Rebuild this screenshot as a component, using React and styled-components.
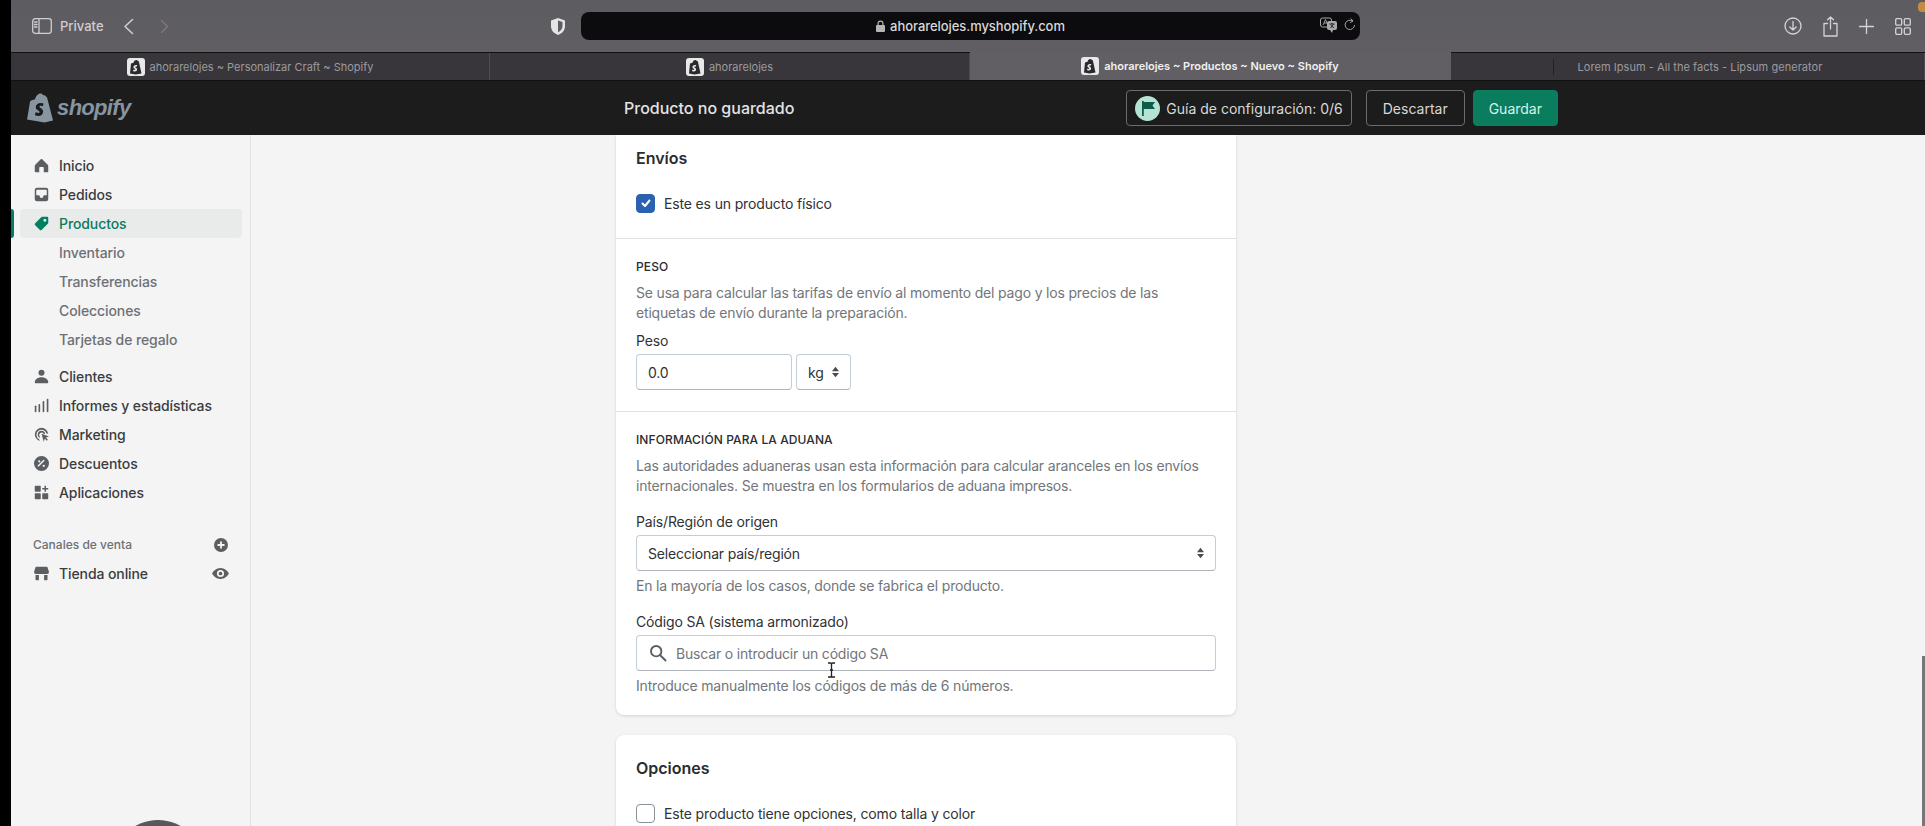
import React from 'react';
import styled, { createGlobalStyle } from 'styled-components';

const GlobalStyle = createGlobalStyle`
  html, body { margin: 0; padding: 0; background: #000; }
  body { font-family: Inter, "Noto Sans", sans-serif; overflow: hidden; }
  * { box-sizing: border-box; }
`;

const Screen = styled.div`
  position: relative;
  width: 1925px;
  height: 826px;
  padding-left: 11px;
  background: #000;
  overflow: hidden;
`;

const Window = styled.div`
  display: flex;
  flex-direction: column;
  height: 100%;
`;

/* browser chrome */
const Toolbar = styled.div`
  height: 52px;
  display: flex;
  align-items: center;
  background: linear-gradient(#5d5c60, #605e63);
  color: #d4d3d6;
`;

const ToolbarLeft = styled.div`
  width: 570px;
  display: flex;
  align-items: center;
  padding-left: 21px;
  color: #cfced1;
`;

const Private = styled.span`
  font-size: 13px;
  font-weight: 500;
  margin: 0 19px 0 8px;
`;

const Forward = styled.span`
  display: flex;
  margin-left: 26px;
  color: #7d7c80;
`;

const Shield = styled.span`
  display: flex;
  margin-left: auto;
  margin-right: 16px;
`;

const UrlBar = styled.div`
  position: relative;
  width: 779px;
  height: 28px;
  display: flex;
  align-items: center;
  justify-content: center;
  gap: 5px;
  border-radius: 8px;
  background: #0c0b0e;
  color: #d8d8d8;
  font-size: 13px;
  font-weight: 500;
  letter-spacing: -0.06px;
`;

const UrlTools = styled.div`
  position: absolute;
  right: 4px;
  top: 5px;
  display: flex;
  align-items: center;
  gap: 6px;
  color: #a8a8a8;
`;

const ToolbarRight = styled.div`
  flex: 1;
  display: flex;
  align-items: center;
  justify-content: flex-end;
  gap: 21px;
  padding-right: 14px;
`;

const TabRow = styled.div`
  height: 29px;
  display: grid;
  grid-template-columns: 479px 480px 481px 1fr;
  border-top: 1px solid #111;
  border-bottom: 1px solid #111;
  background: #38363b;
`;

const Tab = styled.div`
  display: flex;
  align-items: center;
  justify-content: center;
  gap: 5px;
  font-size: 11px;
  font-weight: ${({ $active }) => ($active ? 600 : 400)};
  color: ${({ $active }) => ($active ? '#f0f0f0' : '#9c9b9e')};
  background: ${({ $active }) => ($active ? '#615f64' : 'transparent')};
  border-right: 1px solid ${({ $active }) => ($active ? 'transparent' : '#4c4b4f')};
  margin-top: ${({ $active }) => ($active ? '-1px' : '0')};
`;

const TabSpacer = styled.span`
  width: 6px;
  height: 16px;
  border-left: 1px solid #222;
  margin-right: 10px;
`;

const TabLorem = styled.span`
  letter-spacing: 0.05px;
  margin-left: 4px;
`;

/* shopify top bar */
const TopBar = styled.div`
  height: 54px;
  display: flex;
  align-items: center;
  padding-right: 367px;
  background: #1c1c1d;
  color: #e3e3e3;
`;

const LogoArea = styled.div`
  width: 613px;
  display: flex;
  align-items: center;
  gap: 4px;
  padding-left: 16px;
`;

const LogoText = styled.span`
  font-family: "Liberation Sans", sans-serif;
  font-size: 22px;
  font-weight: 700;
  font-style: italic;
  letter-spacing: -0.7px;
  color: #8795a0;
`;

const PageTitle = styled.div`
  font-size: 16px;
  font-weight: 500;
`;

const BarButton = styled.div`
  height: 36px;
  display: flex;
  align-items: center;
  gap: 6px;
  padding: 0 ${({ $pad }) => $pad || 15}px;
  margin-left: ${({ $gap }) => $gap || 0}px;
  border: 1px solid ${({ $primary }) => ($primary ? '#0a7d5f' : '#6b6b6b')};
  border-radius: 4px;
  background: ${({ $primary }) => ($primary ? '#0a7d5f' : 'transparent')};
  color: ${({ $primary }) => ($primary ? '#d8f3e8' : '#d8d8d8')};
  font-size: 14px;
  white-space: nowrap;
`;

const Actions = styled.div`
  margin-left: auto;
  display: flex;
  align-items: center;
`;

const FlagBadge = styled.span`
  width: 25px;
  height: 25px;
  border-radius: 50%;
  background: #b7e3d5;
  display: flex;
  align-items: center;
  justify-content: center;
`;

/* page */
const Body = styled.div`
  flex: 1;
  display: flex;
  min-height: 0;
  background: #f4f4f4;
`;

const Sidebar = styled.nav`
  width: 240px;
  flex: none;
  padding-top: 16px;
  border-right: 1px solid #e0e0e0;
  background: #f4f4f4;
`;

const NavGroup = styled.div`
  margin-bottom: ${({ $gap }) => $gap || 0}px;
`;

const NavRow = styled.div`
  position: relative;
  height: 29px;
  margin: 0 8px 0 9px;
  display: flex;
  align-items: center;
  gap: 10px;
  padding-left: 14px;
  border-radius: 4px;
  font-size: 14px;
  font-weight: 500;
  letter-spacing: -0.1px;
  color: ${({ $active, $sub }) => ($active ? '#0b7a5c' : $sub ? '#6d7175' : '#3a3d40')};
  background: ${({ $active }) => ($active ? '#e9eaea' : 'transparent')};

  ${({ $active }) =>
    $active &&
    `&::before {
      content: '';
      position: absolute;
      left: -9px;
      top: 0;
      bottom: 0;
      width: 3px;
      background: #008060;
      border-radius: 0 3px 3px 0;
    }`}
`;

const NavIcon = styled.span`
  width: 15px;
  height: 15px;
  flex: none;
  display: flex;
  color: ${({ $active }) => ($active ? '#008060' : '#5c5f62')};
`;

const NavLabel = styled.span`
  margin-left: ${({ $sub }) => ($sub ? '25px' : '0')};
`;

const NavTail = styled.span`
  margin-left: auto;
  margin-right: ${({ $end }) => $end || 14}px;
  display: flex;
  color: #5c5f62;
`;

const ChannelHead = styled.div`
  height: 29px;
  margin: 0 8px 0 9px;
  padding-left: 13px;
  display: flex;
  align-items: center;
  font-size: 12px;
  font-weight: 500;
  color: #6d7175;
`;

const Content = styled.main`
  flex: 1;
  padding-left: 365px;
  overflow: hidden;
`;

const Card = styled.section`
  width: 620px;
  background: #fff;
  border-radius: ${({ $first }) => ($first ? '0 0 8px 8px' : '8px')};
  box-shadow: 0 1px 3px rgba(63, 63, 68, 0.18);
  margin-bottom: 20px;
`;

const Section = styled.div`
  padding: ${({ $top }) => $top}px 20px ${({ $bottom }) => $bottom}px;
  border-bottom: ${({ $divider }) => ($divider ? '1px solid #dfe1e3' : 'none')};
`;

const CardTitle = styled.h2`
  margin: 0 0 23px;
  font-size: 16px;
  line-height: 24px;
  font-weight: 600;
  color: #2a2c2e;
`;

const CheckRow = styled.label`
  display: flex;
  align-items: center;
  gap: 9px;
  height: 20px;
  font-size: 14px;
  letter-spacing: -0.15px;
  color: #303234;
`;

const CheckBox = styled.span`
  width: 19px;
  height: 19px;
  flex: none;
  display: flex;
  align-items: center;
  justify-content: center;
  border-radius: 4px;
  border: 1.5px solid ${({ $checked }) => ($checked ? '#2a62b0' : '#8c9196')};
  background: ${({ $checked }) => ($checked ? '#2a62b0' : '#fff')};
`;

const Subheading = styled.h3`
  margin: 0 0 9px;
  padding-top: 1px;
  margin-bottom: 8px;
  font-size: 12px;
  line-height: 16px;
  font-weight: 500;
  letter-spacing: 0.1px;
  text-transform: uppercase;
  color: #2a2c2e;
`;

const Muted = styled.p`
  margin: 0;
  font-size: 14px;
  line-height: 20px;
  letter-spacing: -0.18px;
  color: #72767a;
`;

const Label = styled.div`
  margin: ${({ $top }) => $top}px 0 3px;
  font-size: 14px;
  line-height: 20px;
  letter-spacing: -0.15px;
  color: #303234;
`;

const FieldRow = styled.div`
  display: flex;
  gap: 4px;
`;

const Field = styled.div`
  width: ${({ $width }) => $width || '100%'};
  height: 36px;
  display: flex;
  align-items: center;
  gap: ${({ $gap }) => $gap || 0}px;
  padding: 0 ${({ $pad }) => $pad || 11}px;
  border: 1px solid #c4cdd5;
  border-bottom-color: #aeb4b9;
  border-radius: 4px;
  background: #fff;
  font-size: 14px;
  letter-spacing: -0.18px;
  color: ${({ $muted }) => ($muted ? '#72767a' : '#303234')};
`;

const Arrows = styled.span`
  margin-left: auto;
  display: flex;
`;

const FieldHelp = styled(Muted)`
  margin-top: 5px;
`;

const Cursor = styled.svg`
  position: absolute;
  left: 827px;
  top: 662px;
  color: #222;
`;

const CamBlob = styled.div`
  position: absolute;
  left: 112px;
  top: 820px;
  width: 92px;
  height: 92px;
  border-radius: 50%;
  background: #58585a;
`;

const ScrollThumb = styled.div`
  position: absolute;
  right: 0;
  top: 656px;
  width: 3px;
  height: 170px;
  background: #777;
`;

const Notice = styled.div`
  position: absolute;
  right: 0;
  top: 2px;
  width: 7px;
  height: 10px;
  border-radius: 4px 0 0 4px;
  background: #c58a45;
`;

const Ico = ({ size = 15, w = 20, h = 20, children, ...rest }) => (
  <svg width={size} height={size} viewBox={`0 0 ${w} ${h}`} fill="currentColor" {...rest}>
    {children}
  </svg>
);

const HomeIcon = () => (
  <Ico><path d="M18 8.5 11 1.7a1.5 1.5 0 0 0-2 0L2 8.5c-.6.6-1 1.3-1 2.1V18a1 1 0 0 0 1 1h5v-6a1 1 0 0 1 1-1h4a1 1 0 0 1 1 1v6h5a1 1 0 0 0 1-1v-7.4c0-.8-.4-1.5-1-2.1z" /></Ico>
);
const OrdersIcon = () => (
  <Ico><path fillRule="evenodd" d="M4 1h12a3 3 0 0 1 3 3v12a3 3 0 0 1-3 3H4a3 3 0 0 1-3-3V4a3 3 0 0 1 3-3zm0 2.5a1 1 0 0 0-1 1V11h3.5c.6 0 1 .4 1 1a2.5 2.5 0 0 0 5 0c0-.6.4-1 1-1H17V4.500a1 1 0 0 0-1-1H4z" /></Ico>
);
const TagIcon = () => (
  <Ico><path fillRule="evenodd" d="M11 1h6.500A1.500 1.500 0 0 1 19 2.500V9a2 2 0 0 1-.6 1.400l-8 8a2 2 0 0 1-2.800 0l-6-6a2 2 0 0 1 0-2.800l8-8A2 2 0 0 1 11 1zm3.500 6.500a2 2 0 1 0 0-4 2 2 0 0 0 0 4z" /></Ico>
);
const PersonIcon = () => (
  <Ico><circle cx="10" cy="5" r="4" /><path d="M2.500 19c-.8 0-1.500-.7-1.500-1.500C1 14 5 11 10 11s9 3 9 6.500c0 .8-.7 1.500-1.500 1.500h-15z" /></Ico>
);
const BarsIcon = () => (
  <Ico><rect x="1" y="10" width="2.200" height="9" rx="1" /><rect x="6" y="8" width="2.200" height="11" rx="1" /><rect x="11.500" y="4" width="2.200" height="15" rx="1" /><rect x="17" y="1" width="2.200" height="18" rx="1" /></Ico>
);
const TargetIcon = () => (
  <Ico>
    <path d="M10 1a9 9 0 0 0-2.500 17.600l-.6-2.200A6.800 6.800 0 1 1 16.600 8.500l2.200.6A9 9 0 0 0 10 1z" />
    <path d="M10 5a5 5 0 0 0-2 9.600l-.6-2.300A2.800 2.800 0 1 1 12.700 9l2.200.600A5 5 0 0 0 10 5z" />
    <path d="m10 9 10 3.500-4 1.600 2.500 3-1.500 1.300-2.500-3L13 19.500 10 9z" />
  </Ico>
);
const DiscountIcon = () => (
  <Ico>
    <path fillRule="evenodd" d="M10 0a10 10 0 1 1 0 20 10 10 0 0 1 0-20zm3.700 5.300a1 1 0 0 0-1.400 0l-7 7a1 1 0 1 0 1.400 1.400l7-7a1 1 0 0 0 0-1.400zM7 5.500a1.500 1.500 0 1 0 0 3 1.500 1.500 0 0 0 0-3zm6 6a1.500 1.500 0 1 0 0 3 1.500 1.500 0 0 0 0-3z" />
  </Ico>
);
const AppsIcon = () => (
  <Ico>
    <rect x="1" y="1" width="8" height="8" rx="1" /><rect x="1" y="11" width="8" height="8" rx="1" /><rect x="11" y="11" width="8" height="8" rx="1" />
    <path d="M14 1h2v3h3v2h-3v3h-2V6h-3V4h3z" />
  </Ico>
);
const StoreIcon = () => (
  <Ico>
    <path d="M3 1h14a1 1 0 0 1 1 .700L20 8a2.500 2.500 0 0 1-2.500 2.500h-15A2.500 2.500 0 0 1 0 8l2-6.300A1 1 0 0 1 3 1z" />
    <path d="M2 12h4.500v7H3a1 1 0 0 1-1-1v-6zm11.500 0H18v6a1 1 0 0 1-1 1h-3.500v-7z" />
  </Ico>
);
const PlusCircle = () => (
  <Ico size={14}><path fillRule="evenodd" d="M10 0a10 10 0 1 1 0 20 10 10 0 0 1 0-20zm1.300 5H8.700v3.700H5v2.600h3.700V15h2.600v-3.700H15V8.700h-3.700V5z" /></Ico>
);
const EyeIcon = () => (
  <Ico size={17}><path fillRule="evenodd" d="M10 3.500c4.600 0 8.200 3.300 9.700 6.100a.8.8 0 0 1 0 .8c-1.500 2.800-5.100 6.100-9.700 6.100S1.800 13.200.3 10.400a.8.8 0 0 1 0-.8C1.800 6.800 5.400 3.500 10 3.500zm0 2.300a4.200 4.200 0 1 0 0 8.400 4.200 4.200 0 0 0 0-8.400zm0 2a2.200 2.200 0 1 1 0 4.400 2.200 2.200 0 0 1 0-4.400z" /></Ico>
);

const ShopifyBag = ({ size = 30, color = '#8795a0', mark = '#1c1c1d' }) => (
  <svg width={size * 0.87} height={size} viewBox="0 0 26 30">
    <path fill={color} d="M4 7.500 8 6.300C8.800 3 11 .5 13.500.5c1.200 0 2 .7 2.500 1.700l1.300-.3L20 4.500 26 27.500 17.500 29.500 0 26.500 3 8.500z" />
    <path fill={mark} d="M16.500 10.500c-.8-.4-1.700-.6-2.800-.6-3 0-5 1.900-5 4.300 0 2.900 3.800 3.200 3.800 4.800 0 .6-.5 1-1.200 1-1.100 0-2.600-.9-2.600-.9l-.8 2.900s1.400 1 3.400 1c3 0 4.800-1.900 4.800-4.500 0-3-3.700-3.400-3.700-4.700 0-.5.4-1 1.500-1 .8 0 1.900.5 1.900.5l.7-2.800z" />
  </svg>
);

const Favicon = () => (
  <svg width="18" height="18" viewBox="0 0 18 18">
    <rect width="18" height="18" rx="3" fill="#e8e8e8" />
    <path fill="#2a2a2c" d="M4 5.500 6.500 4.800C7 3 8 2 9.300 2c.7 0 1.200.4 1.500 1l1 .3L14.500 15.500 8.500 16.500 3 15.500z" />
    <path fill="#e8e8e8" d="M10.300 7.300c-.4-.2-.9-.3-1.400-.3-1.500 0-2.500 1-2.500 2.100 0 1.500 1.900 1.600 1.900 2.400 0 .3-.2.500-.6.500-.6 0-1.300-.4-1.300-.4l-.4 1.400s.7.500 1.700.5c1.500 0 2.400-1 2.400-2.300 0-1.500-1.900-1.700-1.900-2.300 0-.3.200-.5.800-.5.400 0 .9.200.9.200l.4-1.300z" />
  </svg>
);

const Stepper = ({ color = '#4a4d50' }) => (
  <svg width="7" height="12" viewBox="0 0 8 12" fill={color}>
    <path d="M4 0 8 5H0zM4 12 0 7h8z" />
  </svg>
);

const Check = () => (
  <svg width="12" height="12" viewBox="0 0 12 12" fill="none" stroke="#fff" strokeWidth="2" strokeLinecap="round" strokeLinejoin="round">
    <path d="m2.500 6.500 2.500 2.500 4.500-5.500" />
  </svg>
);

const Stroke = ({ w, h, sw = 1.3, children }) => (
  <svg width={w} height={h} viewBox={`0 0 ${w} ${h}`} fill="none" stroke="currentColor" strokeWidth={sw} strokeLinecap="round" strokeLinejoin="round">
    {children}
  </svg>
);

const mainNav = [
  { label: 'Inicio', icon: <HomeIcon /> },
  { label: 'Pedidos', icon: <OrdersIcon /> },
  { label: 'Productos', icon: <TagIcon />, active: true },
  { label: 'Inventario', sub: true },
  { label: 'Transferencias', sub: true },
  { label: 'Colecciones', sub: true },
  { label: 'Tarjetas de regalo', sub: true },
];

const moreNav = [
  { label: 'Clientes', icon: <PersonIcon /> },
  { label: 'Informes y estadísticas', icon: <BarsIcon /> },
  { label: 'Marketing', icon: <TargetIcon /> },
  { label: 'Descuentos', icon: <DiscountIcon /> },
  { label: 'Aplicaciones', icon: <AppsIcon /> },
];

const renderNav = (items) =>
  items.map((item) => (
    <NavRow key={item.label} $active={item.active} $sub={item.sub}>
      {item.icon && <NavIcon $active={item.active}>{item.icon}</NavIcon>}
      <NavLabel $sub={item.sub}>{item.label}</NavLabel>
    </NavRow>
  ));

const App = () => (
  <>
    <GlobalStyle />
    <Screen>
      <Window>
        <Toolbar>
          <ToolbarLeft>
            <Stroke w={20} h={16}>
              <rect x="0.700" y="0.700" width="18.600" height="14.600" rx="2.500" />
              <path d="M7 1v14M2.500 4h2.500M2.500 6.500h2.500M2.500 9h2.500" />
            </Stroke>
            <Private>Private</Private>
            <Stroke w={11} h={17} sw={1.6}><path d="M9.500 1.500 2 8.500l7.500 7" /></Stroke>
            <Forward><Stroke w={9} h={15}><path d="m1.500 1.500 6 6-6 6" /></Stroke></Forward>
            <Shield>
              <svg width="14" height="17" viewBox="0 0 14 17">
                <path fill="#e4e4e4" d="M7 0 14 2.500V8c0 4.500-3 7.500-7 9-4-1.500-7-4.500-7-9V2.500z" />
                <path fill="#5f5d62" d="M7 2.500 11.500 4v4c0 3-2 5.200-4.500 6.300z" />
              </svg>
            </Shield>
          </ToolbarLeft>
          <UrlBar>
            <svg width="9" height="12" viewBox="0 0 9 12" fill="#b5b5b5">
              <path fillRule="evenodd" d="M1.500 5V3.500a3 3 0 0 1 6 0V5h.5a1 1 0 0 1 1 1v5a1 1 0 0 1-1 1H1a1 1 0 0 1-1-1V6a1 1 0 0 1 1-1zm1.200 0h3.600V3.500a1.800 1.800 0 0 0-3.600 0z" />
            </svg>
            ahorarelojes.myshopify.com
            <UrlTools>
              <svg width="18" height="16" viewBox="0 0 18 16">
                <rect x="0.500" y="1" width="11" height="9" rx="2" fill="none" stroke="currentColor" />
                <path d="m3 8 2.500-5.500L8 8M4 6h3" fill="none" stroke="currentColor" strokeWidth="0.900" />
                <rect x="7" y="4" width="10" height="9" rx="2" fill="currentColor" />
                <path d="M9.500 7h5M12 6v1M10.500 11l3-4M10.500 8l3.500 3" fill="none" stroke="#0c0b0e" strokeWidth="0.800" />
                <path d="m10 13 2 3 1-3z" fill="currentColor" />
              </svg>
              <Stroke w={12} h={14} sw={1}><path d="M10.500 7.500a4.700 4.700 0 1 1-2-4.500M7 0.800l2 2.200-2.500 1.500" /></Stroke>
            </UrlTools>
          </UrlBar>
          <ToolbarRight>
            <Stroke w={18} h={18}>
              <circle cx="9" cy="9" r="8" />
              <path d="M9 4.500v8.500M5.800 10 9 13l3.200-3" />
            </Stroke>
            <Stroke w={15} h={21}>
              <path d="M4.500 7.500H1v12.500h13V7.500h-3.500M7.500 13V1M4.500 3.800 7.500 1l3 2.800" />
            </Stroke>
            <Stroke w={15} h={15}><path d="M7.500 0.500v14M0.500 7.500h14" /></Stroke>
            <Stroke w={16} h={17}>
              <rect x="0.700" y="0.700" width="6" height="6.500" rx="1.300" />
              <rect x="9.300" y="0.700" width="6" height="6.500" rx="1.300" />
              <rect x="0.700" y="9.800" width="6" height="6.500" rx="1.300" />
              <rect x="9.300" y="9.800" width="6" height="6.500" rx="1.300" />
            </Stroke>
          </ToolbarRight>
        </Toolbar>

        <TabRow>
          <Tab><Favicon />ahorarelojes ~ Personalizar Craft ~ Shopify</Tab>
          <Tab><Favicon />ahorarelojes</Tab>
          <Tab $active><Favicon />ahorarelojes ~ Productos ~ Nuevo ~ Shopify</Tab>
          <Tab><TabSpacer /><TabLorem>Lorem Ipsum - All the facts - Lipsum generator</TabLorem></Tab>
        </TabRow>

        <TopBar>
          <LogoArea>
            <ShopifyBag />
            <LogoText>shopify</LogoText>
          </LogoArea>
          <PageTitle>Producto no guardado</PageTitle>
          <Actions>
            <BarButton $pad={8}>
              <FlagBadge>
                <svg width="14" height="15" viewBox="0 0 14 15" fill="#0e5c4a">
                  <path d="M1 0h1.800v15H1zM2.800 1H14l-2.500 3.500L14 8H2.800z" />
                </svg>
              </FlagBadge>
              Guía de configuración: 0/6
            </BarButton>
            <BarButton $gap={14} $pad={16}>Descartar</BarButton>
            <BarButton $gap={8} $pad={15} $primary>Guardar</BarButton>
          </Actions>
        </TopBar>

        <Body>
          <Sidebar>
            <NavGroup $gap={8}>{renderNav(mainNav)}</NavGroup>
            <NavGroup $gap={23}>{renderNav(moreNav)}</NavGroup>
            <ChannelHead>
              Canales de venta
              <NavTail><PlusCircle /></NavTail>
            </ChannelHead>
            <NavRow>
              <NavIcon><StoreIcon /></NavIcon>
              <NavLabel>Tienda online</NavLabel>
              <NavTail $end={13}><EyeIcon /></NavTail>
            </NavRow>
          </Sidebar>

          <Content>
            <Card $first>
              <Section $top={11} $bottom={25} $divider>
                <CardTitle>Envíos</CardTitle>
                <CheckRow>
                  <CheckBox $checked><Check /></CheckBox>
                  Este es un producto físico
                </CheckRow>
              </Section>
              <Section $top={19} $bottom={21} $divider>
                <Subheading>Peso</Subheading>
                <Muted>
                  Se usa para calcular las tarifas de envío al momento del pago y los precios de las
                  etiquetas de envío durante la preparación.
                </Muted>
                <Label $top={8}>Peso</Label>
                <FieldRow>
                  <Field $width="156px">0.0</Field>
                  <Field $width="55px" $pad={11}>kg<Arrows><Stepper /></Arrows></Field>
                </FieldRow>
              </Section>
              <Section $top={19} $bottom={19}>
                <Subheading>Información para la aduana</Subheading>
                <Muted>
                  Las autoridades aduaneras usan esta información para calcular aranceles en los envíos
                  internacionales. Se muestra en los formularios de aduana impresos.
                </Muted>
                <Label $top={16}>País/Región de origen</Label>
                <Field>Seleccionar país/región<Arrows><Stepper /></Arrows></Field>
                <FieldHelp>En la mayoría de los casos, donde se fabrica el producto.</FieldHelp>
                <Label $top={16}>Código SA (sistema armonizado)</Label>
                <Field $muted $gap={9} $pad={12}>
                  <svg width="18" height="18" viewBox="0 0 18 18" fill="none" stroke="#5c5f62" strokeWidth="1.900" strokeLinecap="round">
                    <circle cx="7.200" cy="7.200" r="5.200" />
                    <path d="m11 11 5.500 5.500" />
                  </svg>
                  Buscar o introducir un código SA
                </Field>
                <FieldHelp>Introduce manualmente los códigos de más de 6 números.</FieldHelp>
              </Section>
            </Card>
            <Card>
              <Section $top={21} $bottom={20}>
                <CardTitle>Opciones</CardTitle>
                <CheckRow>
                  <CheckBox />
                  Este producto tiene opciones, como talla y color
                </CheckRow>
              </Section>
            </Card>
          </Content>
        </Body>
      </Window>
      <CamBlob />
      <ScrollThumb />
      <Notice />
      <Cursor width="9" height="16" viewBox="0 0 9 16" fill="none" stroke="currentColor" strokeWidth="1.300">
        <path d="M1 1h2.500c.6 0 1 .4 1 1v12c0 .6-.4 1-1 1H1M8 1H5.500c-.6 0-1 .4-1 1M8 15H5.500c-.6 0-1-.4-1-1M3 8h3" />
      </Cursor>
    </Screen>
  </>
);

export default App;
